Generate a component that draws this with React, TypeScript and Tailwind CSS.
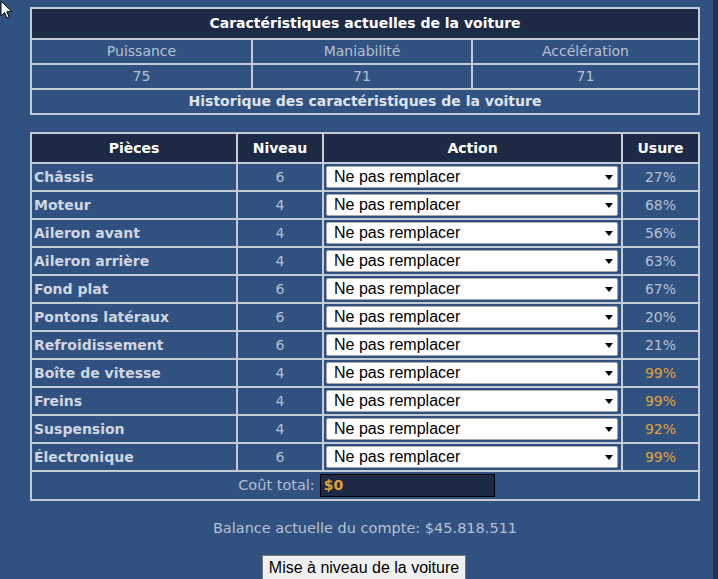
import React from "react";

type Part = { name: string; level: number; wear: number };

const STATS = [
  { label: "Puissance", value: 75 },
  { label: "Maniabilité", value: 71 },
  { label: "Accélération", value: 71 },
];

const PARTS: Part[] = [
  { name: "Châssis", level: 6, wear: 27 },
  { name: "Moteur", level: 4, wear: 68 },
  { name: "Aileron avant", level: 4, wear: 56 },
  { name: "Aileron arrière", level: 4, wear: 63 },
  { name: "Fond plat", level: 6, wear: 67 },
  { name: "Pontons latéraux", level: 6, wear: 20 },
  { name: "Refroidissement", level: 6, wear: 21 },
  { name: "Boîte de vitesse", level: 4, wear: 99 },
  { name: "Freins", level: 4, wear: 99 },
  { name: "Suspension", level: 4, wear: 92 },
  { name: "Électronique", level: 6, wear: 99 },
];

const cell = "border-2 border-[#c3cbd7]";

function ActionSelect() {
  return (
    <div className="relative h-[22px] w-[292px]">
      <select
        defaultValue="keep"
        className="h-full w-full appearance-none rounded-[2px] border border-[#a9a9a9] bg-white pl-[7px] text-left text-[16px] leading-[20px] text-black outline-none [font-family:'Liberation_Sans',Arial,sans-serif]"
      >
        <option value="keep">Ne pas remplacer</option>
        <option value="new">Remplacer par une pièce neuve</option>
      </select>
      <svg className="pointer-events-none absolute right-[5px] top-[9px]" width="8" height="5" viewBox="0 0 8 5">
        <path d="M0 0h8L4 5z" fill="#000" />
      </svg>
    </div>
  );
}

function Cursor() {
  return (
    <svg className="pointer-events-none absolute left-0 top-0" width="14" height="20" viewBox="0 0 14 20">
      <path d="M1 1v15l3.5-3.5 2.5 5.5 2.2-1-2.4-5.3H12z" fill="#fff" stroke="#000" strokeWidth="1" strokeLinejoin="round" />
    </svg>
  );
}

export default function App() {
  return (
    <div className="relative flex h-[579px] w-[718px] overflow-hidden bg-[#1e3556] [font-family:'DejaVu_Sans',Verdana,sans-serif]">
      <Cursor />
      <div className="flex w-[713px] flex-col bg-[#315280] pt-[7px]">
        <table className="ml-[30px] w-[670px] table-fixed border-collapse text-[14px]">
          <colgroup>
            <col className="w-[221px]" />
            <col className="w-[220px]" />
            <col />
          </colgroup>
          <tbody>
            <tr className="h-[31px]">
              <th colSpan={3} className={`${cell} bg-[#1c2a46] font-bold text-white`}>
                Caractéristiques actuelles de la voiture
              </th>
            </tr>
            <tr className="h-[25px]">
              {STATS.map((s) => (
                <td key={s.label} className={`${cell} text-center text-[#b4c0d2]`}>
                  {s.label}
                </td>
              ))}
            </tr>
            <tr className="h-[25px]">
              {STATS.map((s) => (
                <td key={s.label} className={`${cell} text-center text-[#b4c0d2]`}>
                  {s.value}
                </td>
              ))}
            </tr>
            <tr className="h-[25px]">
              <td colSpan={3} className={`${cell} text-center font-bold text-[#dfe4ec]`}>
                Historique des caractéristiques de la voiture
              </td>
            </tr>
          </tbody>
        </table>

        <table className="ml-[30px] mt-[17px] w-[670px] table-fixed border-collapse text-[14px]">
          <colgroup>
            <col className="w-[206px]" />
            <col className="w-[86px]" />
            <col className="w-[299px]" />
            <col />
          </colgroup>
          <thead>
            <tr className="h-[30px]">
              {["Pièces", "Niveau", "Action", "Usure"].map((h) => (
                <th key={h} className={`${cell} bg-[#1c2a46] text-center font-bold text-white`}>
                  {h}
                </th>
              ))}
            </tr>
          </thead>
          <tbody>
            {PARTS.map((p) => (
              <tr key={p.name} className="h-[28px]">
                <td className={`${cell} pl-[2px] font-bold text-[#cfd6e1]`}>{p.name}</td>
                <td className={`${cell} text-center text-[#b4c0d2]`}>{p.level}</td>
                <td className={`${cell} px-[2px]`}>
                  <ActionSelect />
                </td>
                <td className={`${cell} text-center ${p.wear >= 90 ? "text-[#e2a236]" : "text-[#b4c0d2]"}`}>
                  {p.wear}%
                </td>
              </tr>
            ))}
            <tr className="h-[29px]">
              <td colSpan={4} className={`${cell} text-center`}>
                <div className="flex items-center justify-center gap-[5px] pl-[3px]">
                  <span className="text-[14.5px] text-[#b4c0d2]">Coût total:</span>
                  <div className="flex h-[23px] w-[175px] items-center border border-black bg-[#1c2a46] pl-[3px] font-bold text-[#e2a236]">
                    $0
                  </div>
                </div>
              </td>
            </tr>
          </tbody>
        </table>

        <p className="mt-[17px] w-[730px] text-center text-[14.5px] text-[#b4c0d2]">
          Balance actuelle du compte: $45.818.511
        </p>

        <div className="mt-[15px] flex w-[728px] justify-center">
          <button className="h-[28px] shrink-0 border border-[#767676] bg-[#f0f0f0] px-[6px] pb-[1px] text-[16px] leading-[22px] text-black [font-family:'Liberation_Sans',Arial,sans-serif]">
            Mise à niveau de la voiture
          </button>
        </div>
      </div>
    </div>
  );
}
